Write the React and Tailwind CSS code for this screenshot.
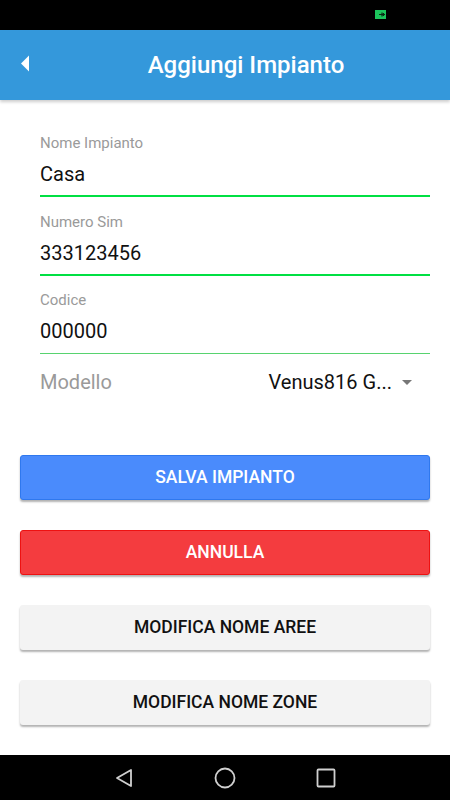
import React from "react";

function Field({ label, value, mt, line }) {
  return (
    <div className={mt}>
      <div className="h-[18px] text-[15px] leading-[18px] text-[#9a9a9a]">{label}</div>
      <div className="mt-[10px] h-[24px] text-[20px] leading-[24px] text-[#111]">{value}</div>
      {line}
    </div>
  );
}

function Btn({ children, cls }) {
  return (
    <div
      className={
        "h-[45px] rounded-[3px] flex items-center justify-center text-[17.5px] font-medium leading-none shadow-[0_2px_2px_rgba(0,0,0,0.3)] " +
        cls
      }
    >
      {children}
    </div>
  );
}

export default function App() {
  return (
    <div
      className="w-[450px] h-[800px] flex flex-col bg-white overflow-hidden"
      style={{ fontFamily: "Roboto, 'Noto Sans', sans-serif" }}
    >
      <div className="h-[30px] bg-black flex items-start justify-end pr-[64px] pt-[10px] shrink-0">
        <svg width="11" height="9" viewBox="0 0 11 9">
          <rect x="0" y="0" width="11" height="9" fill="#1cc45c" />
          <path d="M4 4.5h6M7 2.5v4M8.5 3v3" stroke="#0a2a14" strokeWidth="1.2" />
        </svg>
      </div>
      <div className="h-[70px] bg-[#3498db] shrink-0 relative flex items-center shadow-[0_2px_3px_rgba(0,0,0,0.2)] z-10">
        <svg className="absolute left-[20px] top-[25px]" width="10" height="17" viewBox="0 0 10 17">
          <path d="M9 0.5L9 16.5L1 8.5Z" fill="#fff" />
        </svg>
        <div className="w-full text-center pl-[42px] text-white text-[24px] font-medium">Aggiungi Impianto</div>
      </div>
      <div className="flex-1 flex flex-col">
        <div className="pl-[40px] pr-[20px] pt-[34px]">
          <Field label="Nome Impianto" value="Casa" mt="" line={<div className="mt-[9px] h-[2px] bg-[#00e043]" />} />
          <Field label="Numero Sim" value="333123456" mt="mt-[16px]" line={<div className="mt-[9px] h-[2px] bg-[#00e043]" />} />
          <Field label="Codice" value="000000" mt="mt-[15px]" line={<div className="mt-[10px] h-0 border-t border-[#57d36f]" />} />
          <div className="mt-[16px] h-[24px] flex items-center justify-between">
            <span className="text-[20px] leading-[24px] text-[#9a9a9a]">Modello</span>
            <div className="flex items-center">
              <span className="text-[20px] leading-[24px] text-[#111]">Venus816 G...</span>
              <svg className="ml-[10px] mr-[18px] mt-[1px]" width="10" height="5" viewBox="0 0 10 5">
                <path d="M0 0H10L5 5Z" fill="#777" />
              </svg>
            </div>
          </div>
        </div>
        <div className="px-[20px] mt-[61px] flex flex-col gap-[30px]">
          <Btn cls="bg-[#4a8bfc] border border-[#2f78ee] text-white">SALVA IMPIANTO</Btn>
          <Btn cls="bg-[#f43c3f] border border-[#ee1111] text-white">ANNULLA</Btn>
          <Btn cls="bg-[#f3f3f3] text-[#111]">MODIFICA NOME AREE</Btn>
          <Btn cls="bg-[#f3f3f3] text-[#111]">MODIFICA NOME ZONE</Btn>
        </div>
      </div>
      <div className="h-[45px] bg-black shrink-0 flex items-center justify-center gap-[80px]">
        <svg width="20" height="20" viewBox="0 0 20 20">
          <path d="M17 2L17 18L3 10Z" fill="none" stroke="#d0d0d0" strokeWidth="1.8" strokeLinejoin="round" />
        </svg>
        <svg width="22" height="22" viewBox="0 0 22 22">
          <circle cx="11" cy="11" r="9.5" fill="none" stroke="#d0d0d0" strokeWidth="1.8" />
        </svg>
        <svg width="20" height="20" viewBox="0 0 20 20">
          <rect x="1.5" y="1.5" width="17" height="17" rx="1" fill="none" stroke="#d0d0d0" strokeWidth="1.8" />
        </svg>
      </div>
    </div>
  );
}
